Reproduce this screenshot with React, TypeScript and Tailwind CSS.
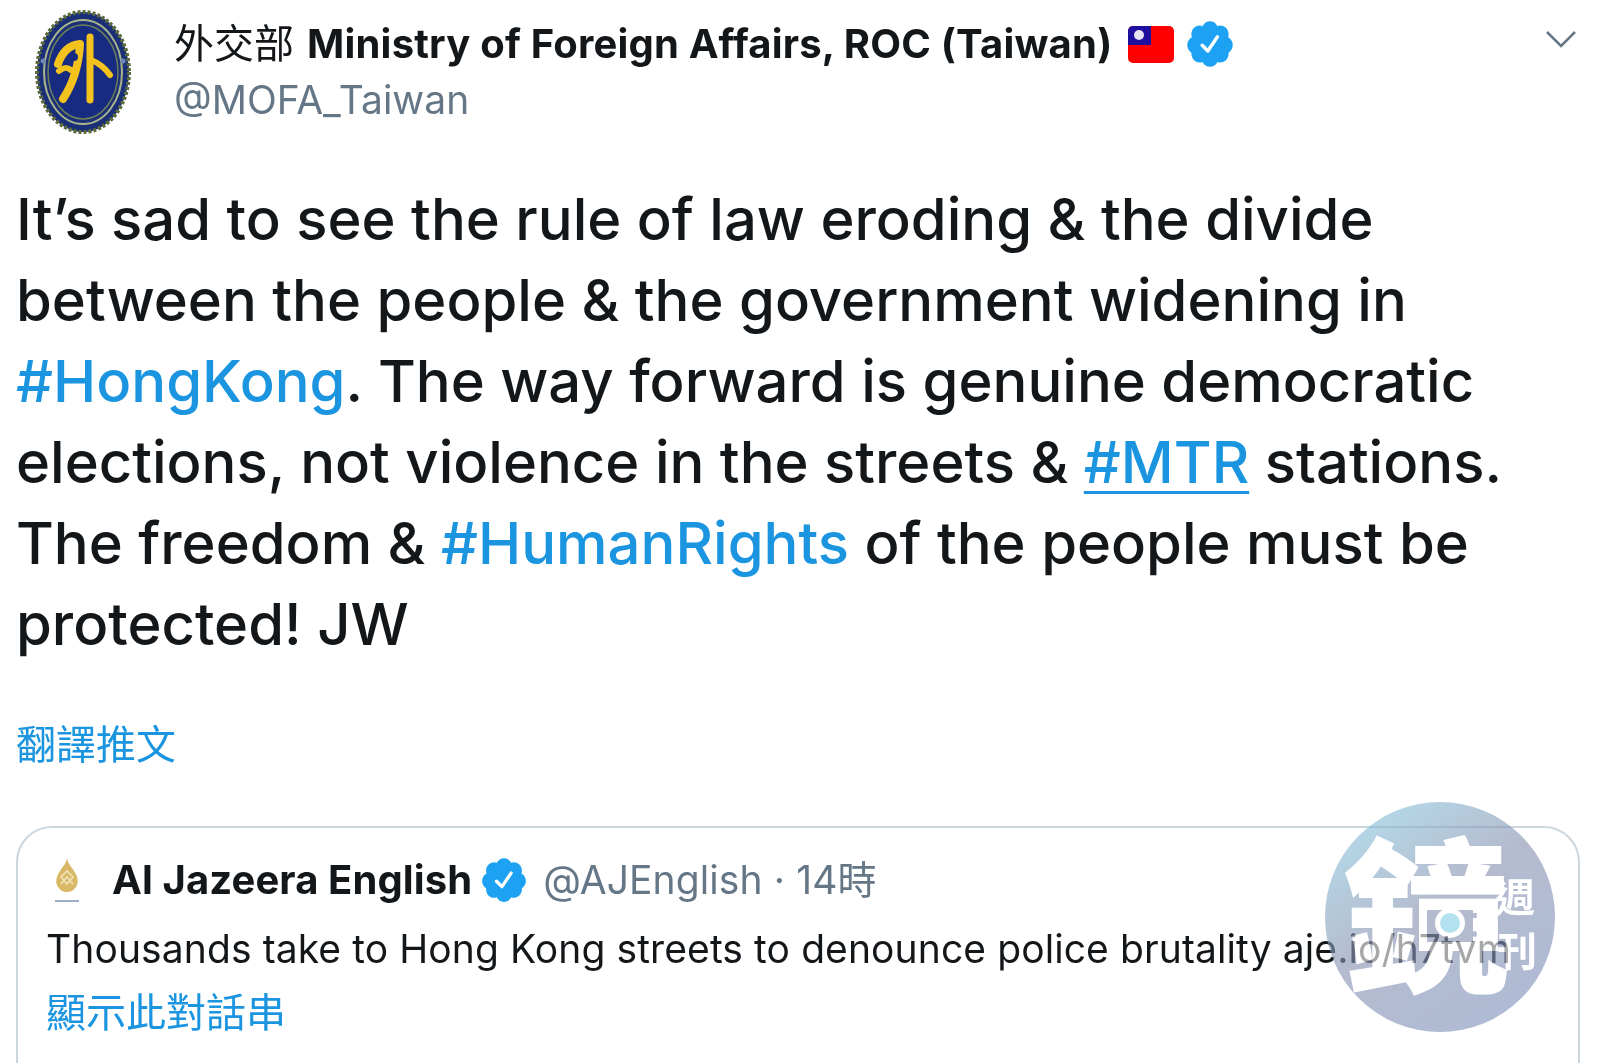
function VerifiedBadge({ className }: { className: string }) {
  return (
    <svg viewBox="0 0 24 24" className={className}>
      <path
        fill="#1da1f2"
        d="M22.5 12.5c0-1.58-.875-2.95-2.148-3.6.154-.435.238-.905.238-1.4 0-2.21-1.71-3.998-3.818-3.998-.47 0-.92.084-1.336.25C14.818 2.415 13.51 1.5 12 1.5s-2.816.917-3.437 2.25c-.415-.165-.866-.25-1.336-.25-2.11 0-3.818 1.79-3.818 4 0 .494.083.964.237 1.4-1.272.65-2.147 2.018-2.147 3.6 0 1.495.782 2.798 1.942 3.486-.02.17-.032.34-.032.514 0 2.21 1.708 4 3.818 4 .47 0 .92-.086 1.335-.25.62 1.334 1.926 2.25 3.437 2.25 1.512 0 2.818-.916 3.437-2.25.415.163.865.248 1.336.248 2.11 0 3.818-1.79 3.818-4 0-.174-.012-.344-.033-.513 1.158-.687 1.943-1.99 1.943-3.484z"
      />
      <path fill="none" stroke="#fff" strokeWidth="1.6" strokeLinecap="round" strokeLinejoin="round" d="M8.4 12.6l2.6 2.6 4.4-6.5" />
    </svg>
  )
}

function MofaLogo() {
  return (
    <svg viewBox="0 0 100 126" className="h-[126px] w-[100px] shrink-0">
      <ellipse cx="50" cy="63" rx="46" ry="60" fill="#1a2f78" stroke="#5d6b3a" strokeWidth="4" strokeDasharray="3 2" />
      <ellipse cx="50" cy="63" rx="39" ry="52" fill="none" stroke="#a9b58a" strokeWidth="2" />
      <ellipse cx="50" cy="63" rx="35" ry="47" fill="#172c80" stroke="#6d7f5a" strokeWidth="1.5" />
      <circle cx="10" cy="52" r="2.5" fill="#6f86b8" />
      <circle cx="90" cy="52" r="2.5" fill="#6f86b8" />
      <g fill="none" stroke="#f4c21c" strokeLinecap="round" strokeLinejoin="round">
        <path strokeWidth="8" d="M25 55c4-12 12-19 22-20-1 20-6 38-17 55" />
        <path strokeWidth="6" d="M26 62c5-4 8-4 12-1" />
        <path strokeWidth="7" d="M57 28v63" />
        <path strokeWidth="6" d="M58 51c8 3 14 8 19 15" />
      </g>
      <circle cx="41" cy="48" r="4" fill="#172c80" />
    </svg>
  )
}

function JazeeraLogo() {
  return (
    <svg viewBox="0 0 30 48" className="h-[48px] w-[30px] shrink-0">
      <path fill="#d9b866" d="M15 1c1 6 4 8 7 13 4 6 5 11 2 16-2 3-5 5-9 5s-7-2-9-5c-3-5-2-10 2-16 3-5 6-7 7-13z" />
      <path fill="none" stroke="#f1e2bb" strokeWidth="1.6" d="M9 20l6 7 6-7-6-6zM9 27l6-7 6 7" />
      <rect x="3" y="43" width="24" height="2" fill="#9fb0c4" />
    </svg>
  )
}

export default function App() {
  const cjk = "font-['Inter','Noto_Sans_CJK_TC',sans-serif]"
  return (
    <div className={`relative h-[1063px] w-[1600px] overflow-hidden bg-white px-4 text-[#14171a] blur-[0.7px] ${cjk}`}>
      <div className="flex h-[179px] items-start">
        <div className="ml-[17px] mt-[9px]">
          <MofaLogo />
        </div>
        <div className="ml-[41px] mt-[16px] flex-1">
          <div className="flex h-[56px] items-center text-[40px] font-bold">
            <span className="font-normal">外交部</span>
            <span className="ml-[13px] tracking-[0.2px]">Ministry of Foreign Affairs, ROC (Taiwan)</span>
            <svg viewBox="0 0 46 37" className="ml-[15px] h-[37px] w-[48px]">
              <rect width="46" height="37" rx="5" fill="#ff0000" />
              <path d="M0 5a5 5 0 0 1 5-5h18v19H0z" fill="#1f0f9e" />
              <circle cx="11" cy="9" r="5" fill="#e8e4f4" />
            </svg>
            <VerifiedBadge className="ml-[9px] h-[52px] w-[52px]" />
          </div>
          <div className="mt-[2px] text-[39px] leading-[52px] text-[#657786]">@MOFA_Taiwan</div>
        </div>
        <svg viewBox="0 0 32 20" className="mt-[29px] mr-[7px] h-[20px] w-[32px] text-[#657786]">
          <path d="M2 3l14 14L30 3" fill="none" stroke="currentColor" strokeWidth="2.5" />
        </svg>
      </div>

      <p className="whitespace-nowrap text-[58px] leading-[81px] font-[450]">
        It’s sad to see the rule of law eroding &amp; the divide
        <br />
        between the people &amp; the government widening in
        <br />
        <span className="text-[#1b95e0]">#HongKong</span>. The way forward is genuine democratic
        <br />
        elections, not violence in the streets &amp;{" "}
        <span className="text-[#1b95e0] underline decoration-[3px] underline-offset-[8px]">#MTR</span> stations.
        <br />
        The freedom &amp; <span className="text-[#1b95e0]">#HumanRights</span> of the people must be
        <br />
        protected! JW
      </p>

      <div className="mt-[52px] text-[40px] leading-[56px] text-[#1b95e0]">翻譯推文</div>

      <div className="mr-[4px] mt-[53px] h-[300px] rounded-[36px] border-2 border-[#ccd6dd] px-[28px] pt-[22px]">
        <div className="flex h-[60px] items-center text-[40px]">
          <div className="ml-[6px] mt-[2px]">
            <JazeeraLogo />
          </div>
          <span className="ml-[30px] font-bold tracking-[0.1px]">Al Jazeera English</span>
          <VerifiedBadge className="ml-[7px] h-[50px] w-[50px]" />
          <span className="ml-[14px] text-[39px] tracking-[0.1px] text-[#657786]">@AJEnglish · 14時</span>
        </div>
        <div className="mt-[13px] whitespace-nowrap text-[39px] leading-[52px] tracking-[0.1px]">
          Thousands take to Hong Kong streets to denounce police brutality aje.io/h7tvm
        </div>
        <div className="mt-[12px] text-[40px] leading-[52px] text-[#1b95e0]">顯示此對話串</div>
      </div>

      {/* watermark sits over the card */}
      <div className="absolute left-[1325px] top-[802px] h-[230px] w-[230px] rounded-full bg-[linear-gradient(145deg,#86d0e7_0%,#8893b2_45%,#7c90bd_100%)] opacity-[0.62]">
        <span className="absolute left-[18px] top-[22px] text-[166px] leading-none font-black text-white font-['Noto_Sans_CJK_TC',sans-serif]">
          鏡
        </span>
        <span className="absolute left-[170px] top-[70px] text-[40px] leading-[46px] font-bold text-white font-['Noto_Sans_CJK_TC',sans-serif]">
          週
        </span>
        <span className="absolute left-[172px] top-[124px] text-[40px] leading-[46px] font-bold text-white font-['Noto_Sans_CJK_TC',sans-serif]">
          刊
        </span>
        <div className="absolute left-[102px] top-[108px] h-[32px] w-[46px] bg-[#8893b2]" />
        <div className="absolute left-[110px] top-[106px] h-[30px] w-[30px] rounded-full border-[5px] border-white bg-[#86d0e7]" />
      </div>
    </div>
  )
}
